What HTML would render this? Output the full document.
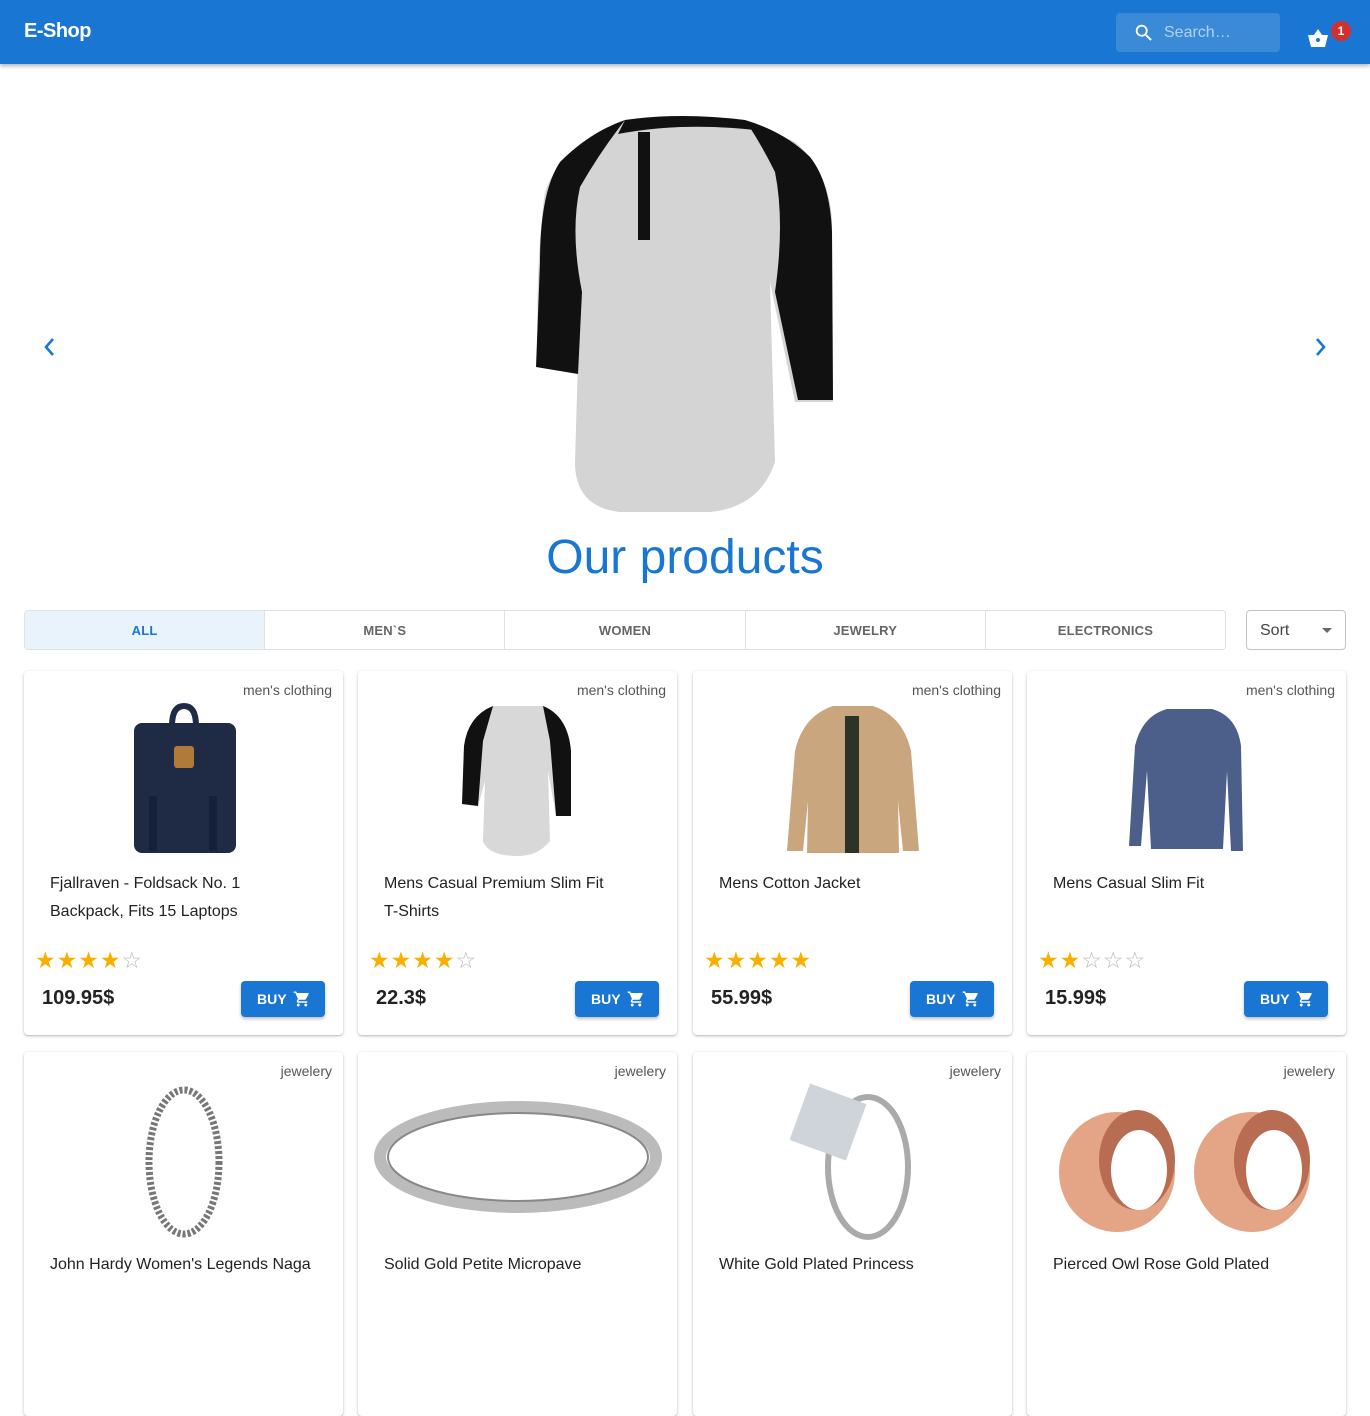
<!DOCTYPE html>
<html><head><meta charset="utf-8"><style>
*{box-sizing:border-box;margin:0;padding:0}
body{width:1370px;height:1280px;overflow:hidden;background:#fff;font-family:"Liberation Sans",Roboto,sans-serif;position:relative;color:#222}
.bar{position:absolute;left:0;top:0;width:1370px;height:64px;background:#1976d2;box-shadow:0 2px 4px rgba(0,0,0,.3)}
.logo{position:absolute;left:24px;top:20px;color:#fff;font-weight:bold;font-size:20px;letter-spacing:-.5px}
.search{position:absolute;left:1116px;top:13px;width:164px;height:39px;background:rgba(255,255,255,.15);border-radius:4px}
.search span{position:absolute;left:48px;top:11px;color:rgba(255,255,255,.6);font-size:16px}
.badge{position:absolute;left:1331px;top:21px;width:20px;height:20px;border-radius:50%;background:#d32f2f;color:#fff;font-size:12px;text-align:center;line-height:20px;font-weight:bold}
.h2{position:absolute;left:0;width:1370px;top:530px;text-align:center;color:#1976d2;font-size:48px}
.tabs{position:absolute;left:24px;top:610px;width:1202px;height:40px;border:1px solid #dde2e6;border-radius:4px;display:flex;overflow:hidden}
.tabs div{flex:1;text-align:center;line-height:39px;font-size:13px;font-weight:bold;color:#666;border-left:1px solid #dde2e6;letter-spacing:.2px}
.tabs div:first-child{border-left:none;background:#e8f3fb;color:#1976d2}
.sort{position:absolute;left:1246px;top:610px;width:100px;height:40px;border:1px solid #c4c4c4;border-radius:4px;font-size:16px;color:#444;padding:11px 13px}
.sort:after{content:"";position:absolute;right:13px;top:17px;border:5px solid transparent;border-top-color:#666}
.card{position:absolute;width:319px;height:364px;background:#fff;border-radius:4px;box-shadow:0 1px 3px rgba(0,0,0,.22),0 1px 1px rgba(0,0,0,.1)}
.cat{position:absolute;right:11px;top:11px;font-size:14px;color:#555}
.img{position:absolute;left:0;top:30px;width:319px;height:160px}
.t{position:absolute;left:26px;top:199px;width:270px;font-size:16px;line-height:28px;color:#222}
.st{position:absolute;left:11px;top:276px;font-size:23px;letter-spacing:1px;color:#faaf00}
.st i{font-style:normal;color:#bbb}
.pr{position:absolute;left:18px;top:316px;font-size:20px;font-weight:bold;color:#222}
.buy{position:absolute;left:217px;top:310px;width:84px;height:36px;background:#1976d2;border-radius:4px;box-shadow:0 2px 3px rgba(0,0,0,.25);color:#fff;font-size:14px;font-weight:bold;padding:10px 0 0 16px}
.buy svg{position:absolute;left:52px;top:9px}
</style></head><body>
<div class="bar"><div class="logo">E-Shop</div>
<div class="search"><svg style="position:absolute;left:17px;top:9px" width="22" height="22" viewBox="0 0 24 24"><path fill="#fff" d="M15.5 14h-.79l-.28-.27A6.470 6.470 0 0016 9.5 6.5 6.5 0 109.5 16c1.61 0 3.09-.59 4.23-1.57l.27.28v.79l5 4.99L20.49 19l-4.99-5zm-6 0C7.01 14 5 11.99 5 9.5S7.01 5 9.5 5 14 7.01 14 9.5 11.99 14 9.5 14z"/></svg><span>Search…</span></div>
<svg style="position:absolute;left:1306px;top:27px" width="24" height="22" viewBox="0 0 24 22"><path fill="#fff" d="M8 8l4-6 4 6h6l-3 12H5L2 8z M12 11a2 2 0 100 4 2 2 0 000-4z" fill-rule="evenodd"/></svg>
<div class="badge">1</div></div>

<svg style="position:absolute;left:38px;top:335px" width="24" height="24" viewBox="0 0 24 24"><path d="M15 4l-7 8 7 8" stroke="#1976d2" stroke-width="2.6" fill="none"/></svg>
<svg style="position:absolute;left:1308px;top:335px" width="24" height="24" viewBox="0 0 24 24"><path d="M9 4l7 8-7 8" stroke="#1976d2" stroke-width="2.6" fill="none"/></svg>

<svg style="position:absolute;left:530px;top:112px" width="310" height="404" viewBox="0 0 310 404">
<path d="M95 8 L215 8 L265 30 Q300 60 302 110 L303 290 L265 290 L240 170 L245 350 Q230 395 180 400 L90 400 Q45 395 45 350 L50 180 L45 260 L8 255 Q5 150 15 80 Q30 35 95 8Z" fill="#d4d4d4"/>
<path d="M95 8 Q60 20 30 50 Q10 80 10 150 L6 255 L48 262 L52 180 Q40 120 50 75 Q70 40 95 8Z" fill="#111"/>
<path d="M215 8 Q255 20 280 45 Q300 70 302 120 L303 288 L268 288 L245 180 Q255 110 245 60 Q230 30 215 8Z" fill="#111"/>
<path d="M95 8 Q150 0 215 8 L225 18 Q150 10 88 22Z" fill="#111"/>
<path d="M108 20 L120 20 L120 128 L108 128Z" fill="#111"/>
</svg>

<div class="h2">Our products</div>
<div class="tabs"><div>ALL</div><div>MEN`S</div><div>WOMEN</div><div>JEWELRY</div><div>ELECTRONICS</div></div>
<div class="sort">Sort</div>

<div class="card" style="left:24px;top:671px"><div class="cat">men's clothing</div>
<svg class="img" viewBox="0 0 319 160"><rect x="110" y="22" width="102" height="130" rx="8" fill="#1f2a44"/><path d="M148 25 Q148 5 160 5 Q172 5 172 25" stroke="#1f2a44" stroke-width="6" fill="none"/><rect x="150" y="45" width="20" height="22" rx="3" fill="#b07a3a"/><rect x="125" y="95" width="8" height="55" fill="#17203a"/><rect x="185" y="95" width="8" height="55" fill="#17203a"/></svg>
<div class="t">Fjallraven - Foldsack No. 1<br>Backpack, Fits 15 Laptops</div>
<div class="st">★★★★<i>☆</i></div><div class="pr">109.95$</div>
<div class="buy">BUY<svg width="18" height="18" viewBox="0 0 24 24"><path fill="#fff" d="M7 18c-1.1 0-2 .9-2 2s.9 2 2 2 2-.9 2-2-.9-2-2-2zM1 2v2h2l3.6 7.59-1.35 2.45C4.52 15.37 5.48 17 7 17h12v-2H7l1.1-2h7.45c.75 0 1.41-.41 1.75-1.03l3.58-6.49A1 1 0 0020 4H5.21l-.94-2H1zm16 16c-1.1 0-2 .9-2 2s.9 2 2 2 2-.9 2-2-.9-2-2-2z"/></svg></div></div>

<div class="card" style="left:358px;top:671px"><div class="cat">men's clothing</div>
<svg class="img" viewBox="0 0 319 160"><path d="M135 5 L185 5 Q210 15 213 50 L213 115 L198 115 L190 70 L192 140 Q180 155 160 155 Q130 155 125 140 L127 80 L120 105 L104 103 L106 45 Q110 15 135 5Z" fill="#d8d8d8"/><path d="M135 5 Q110 15 106 45 L104 103 L120 105 L125 40Z M185 5 Q210 15 213 50 L213 115 L198 115 L192 40Z" fill="#111"/></svg>
<div class="t">Mens Casual Premium Slim Fit<br>T-Shirts</div>
<div class="st">★★★★<i>☆</i></div><div class="pr">22.3$</div>
<div class="buy">BUY<svg width="18" height="18" viewBox="0 0 24 24"><path fill="#fff" d="M7 18c-1.1 0-2 .9-2 2s.9 2 2 2 2-.9 2-2-.9-2-2-2zM1 2v2h2l3.6 7.59-1.35 2.45C4.52 15.37 5.48 17 7 17h12v-2H7l1.1-2h7.45c.75 0 1.41-.41 1.75-1.03l3.58-6.49A1 1 0 0020 4H5.21l-.94-2H1zm16 16c-1.1 0-2 .9-2 2s.9 2 2 2 2-.9 2-2-.9-2-2-2z"/></svg></div></div>

<div class="card" style="left:693px;top:671px"><div class="cat">men's clothing</div>
<svg class="img" viewBox="0 0 319 160"><path d="M140 5 L180 5 Q210 15 218 50 L226 150 L210 150 L205 100 L206 152 L114 152 L115 100 L110 150 L94 150 L102 50 Q110 15 140 5Z" fill="#c9a67e"/><rect x="152" y="15" width="14" height="137" fill="#2e3328"/></svg>
<div class="t">Mens Cotton Jacket</div>
<div class="st">★★★★★</div><div class="pr">55.99$</div>
<div class="buy">BUY<svg width="18" height="18" viewBox="0 0 24 24"><path fill="#fff" d="M7 18c-1.1 0-2 .9-2 2s.9 2 2 2 2-.9 2-2-.9-2-2-2zM1 2v2h2l3.6 7.59-1.35 2.45C4.52 15.37 5.48 17 7 17h12v-2H7l1.1-2h7.45c.75 0 1.41-.41 1.75-1.03l3.58-6.49A1 1 0 0020 4H5.21l-.94-2H1zm16 16c-1.1 0-2 .9-2 2s.9 2 2 2 2-.9 2-2-.9-2-2-2z"/></svg></div></div>

<div class="card" style="left:1027px;top:671px"><div class="cat">men's clothing</div>
<svg class="img" viewBox="0 0 319 160"><path d="M140 8 L185 8 Q210 15 214 45 L216 150 L204 150 L200 70 L196 148 L124 148 L120 70 L114 145 L102 145 L108 45 Q115 15 140 8Z" fill="#4b5f8a"/></svg>
<div class="t">Mens Casual Slim Fit</div>
<div class="st">★★<i>☆☆☆</i></div><div class="pr">15.99$</div>
<div class="buy">BUY<svg width="18" height="18" viewBox="0 0 24 24"><path fill="#fff" d="M7 18c-1.1 0-2 .9-2 2s.9 2 2 2 2-.9 2-2-.9-2-2-2zM1 2v2h2l3.6 7.59-1.35 2.45C4.52 15.37 5.48 17 7 17h12v-2H7l1.1-2h7.45c.75 0 1.41-.41 1.75-1.03l3.58-6.49A1 1 0 0020 4H5.21l-.94-2H1zm16 16c-1.1 0-2 .9-2 2s.9 2 2 2 2-.9 2-2-.9-2-2-2z"/></svg></div></div>

<div class="card" style="left:24px;top:1052px"><div class="cat">jewelery</div>
<svg class="img" viewBox="0 0 319 160"><ellipse cx="160" cy="80" rx="35" ry="72" stroke="#777" stroke-width="7" fill="none" stroke-dasharray="3 2"/></svg>
<div class="t">John Hardy Women's Legends Naga</div></div>

<div class="card" style="left:358px;top:1052px"><div class="cat">jewelery</div>
<svg class="img" viewBox="0 0 319 160"><ellipse cx="160" cy="75" rx="138" ry="50" stroke="#bbb" stroke-width="12" fill="none"/><ellipse cx="160" cy="75" rx="130" ry="44" stroke="#888" stroke-width="2" fill="none"/></svg>
<div class="t">Solid Gold Petite Micropave</div></div>

<div class="card" style="left:693px;top:1052px"><div class="cat">jewelery</div>
<svg class="img" viewBox="0 0 319 160"><ellipse cx="175" cy="85" rx="40" ry="70" stroke="#aaa" stroke-width="6" fill="none"/><rect x="105" y="10" width="60" height="60" transform="rotate(20 135 40)" fill="#cfd4da"/></svg>
<div class="t">White Gold Plated Princess</div></div>

<div class="card" style="left:1027px;top:1052px"><div class="cat">jewelery</div>
<svg class="img" viewBox="0 0 319 160"><g fill="#e3a586"><ellipse cx="90" cy="90" rx="58" ry="60"/><ellipse cx="225" cy="90" rx="58" ry="60"/></g><g fill="#b86d52"><ellipse cx="110" cy="78" rx="38" ry="50"/><ellipse cx="245" cy="78" rx="38" ry="50"/></g><g fill="#fff"><ellipse cx="112" cy="88" rx="28" ry="40"/><ellipse cx="247" cy="88" rx="28" ry="40"/></g></svg>
<div class="t">Pierced Owl Rose Gold Plated</div></div>
</body></html>
